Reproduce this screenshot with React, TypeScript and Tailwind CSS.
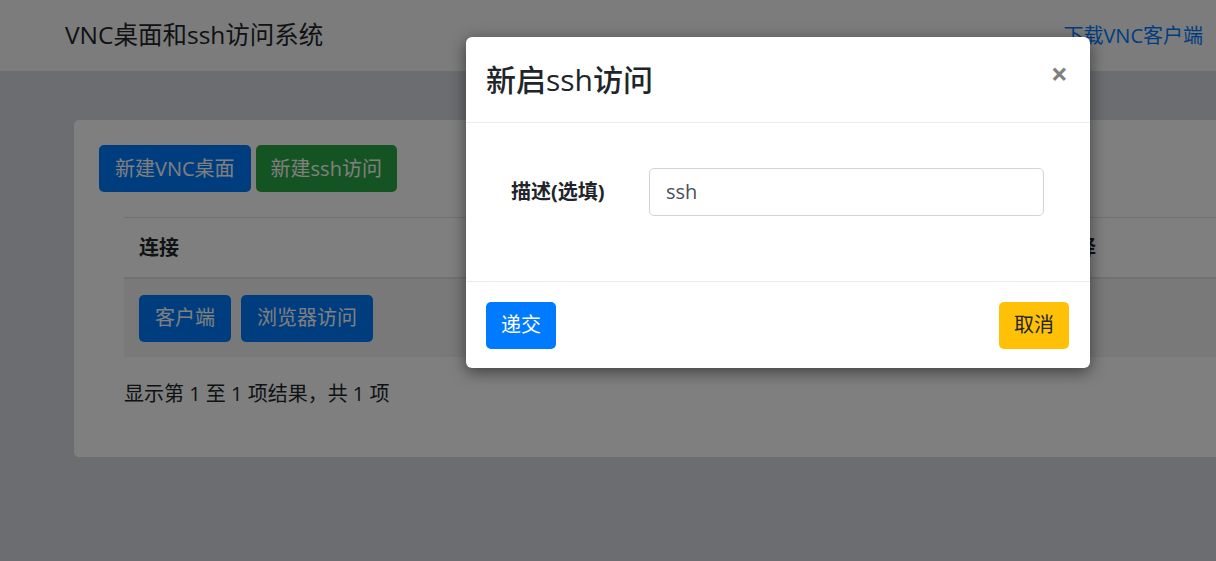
const font = "font-['Open_Sans','Noto_Sans_CJK_SC',sans-serif]";

function Btn({ color, children, className = "" }: { color: string; children: React.ReactNode; className?: string }) {
  return (
    <button className={`h-[47px] rounded-[5px] px-4 text-[20px] leading-none ${color} ${className}`}>
      {children}
    </button>
  );
}

export default function App() {
  return (
    <div className={`relative w-[1216px] h-[561px] overflow-hidden bg-[#d8dae1] text-[#212529] ${font}`}>
      {/* page under the modal */}
      <header className="h-[71px] bg-[#f8f9fa] flex items-center justify-between pl-[65px] pr-[13px]">
        <h1 className="text-[24.5px]">VNC桌面和ssh访问系统</h1>
        <a className="text-[20px] text-[#007bff]">下载VNC客户端</a>
      </header>
      <main className="pl-[74px] pt-[49px]">
        <div className="w-[1170px] h-[337px] bg-white rounded-[5px] px-[25px] pt-[25px]">
          <div className="flex gap-[5px]">
            <Btn color="bg-[#007bff] text-white">新建VNC桌面</Btn>
            <Btn color="bg-[#28a745] text-white" className="px-[15px]">新建ssh访问</Btn>
          </div>
          <div className="ml-[25px] mt-[25px]">
            <div className="h-[62px] border-t border-b-2 border-[#dee2e6] flex items-center px-[15px]">
              <span className="text-[20px] font-bold">连接</span>
              <span className="ml-auto mr-[108px] text-[20px] font-bold">选择</span>
            </div>
            <div className="h-[78px] bg-[#f2f2f2] flex items-center gap-[10px] px-[15px]">
              <Btn color="bg-[#007bff] text-white" className="h-[46px]">客户端</Btn>
              <Btn color="bg-[#007bff] text-white" className="h-[46px]">浏览器访问</Btn>
            </div>
            <p className="mt-[22px] text-[20px]">显示第 1 至 1 项结果，共 1 项</p>
          </div>
        </div>
      </main>

      {/* backdrop */}
      <div className="absolute inset-0 bg-black/50" />

      {/* modal */}
      <div className="absolute left-[466px] top-[37px] w-[624px] rounded-[6px] bg-white shadow-[0_4px_16px_rgba(0,0,0,0.5)]">
        <div className="h-[86px] border-b border-[#e9ecef] flex items-center justify-between pl-[20px] pr-[22px]">
          <h4 className="text-[30px] font-medium text-[#212529]">新启ssh访问</h4>
          <button className="text-[30px] font-bold leading-none text-black/50 -mt-[12px]">×</button>
        </div>
        <div className="h-[158px] pt-[45px] pl-[45px] flex items-start">
          <label className="w-[138px] h-[47px] flex items-center text-[20px] font-bold">描述(选填)</label>
          <div className="w-[395px] h-[48px] border border-[#ced4da] rounded-[5px] flex items-center pl-[16px] text-[20px] text-[#495057]">
            ssh
          </div>
        </div>
        <div className="h-[87px] border-t border-[#e9ecef] flex items-center justify-between px-[20px] pr-[21px]">
          <Btn color="bg-[#007bff] text-white" className="px-[15px]">递交</Btn>
          <Btn color="bg-[#ffc107] text-[#212529]" className="px-[15px]">取消</Btn>
        </div>
      </div>
    </div>
  );
}
